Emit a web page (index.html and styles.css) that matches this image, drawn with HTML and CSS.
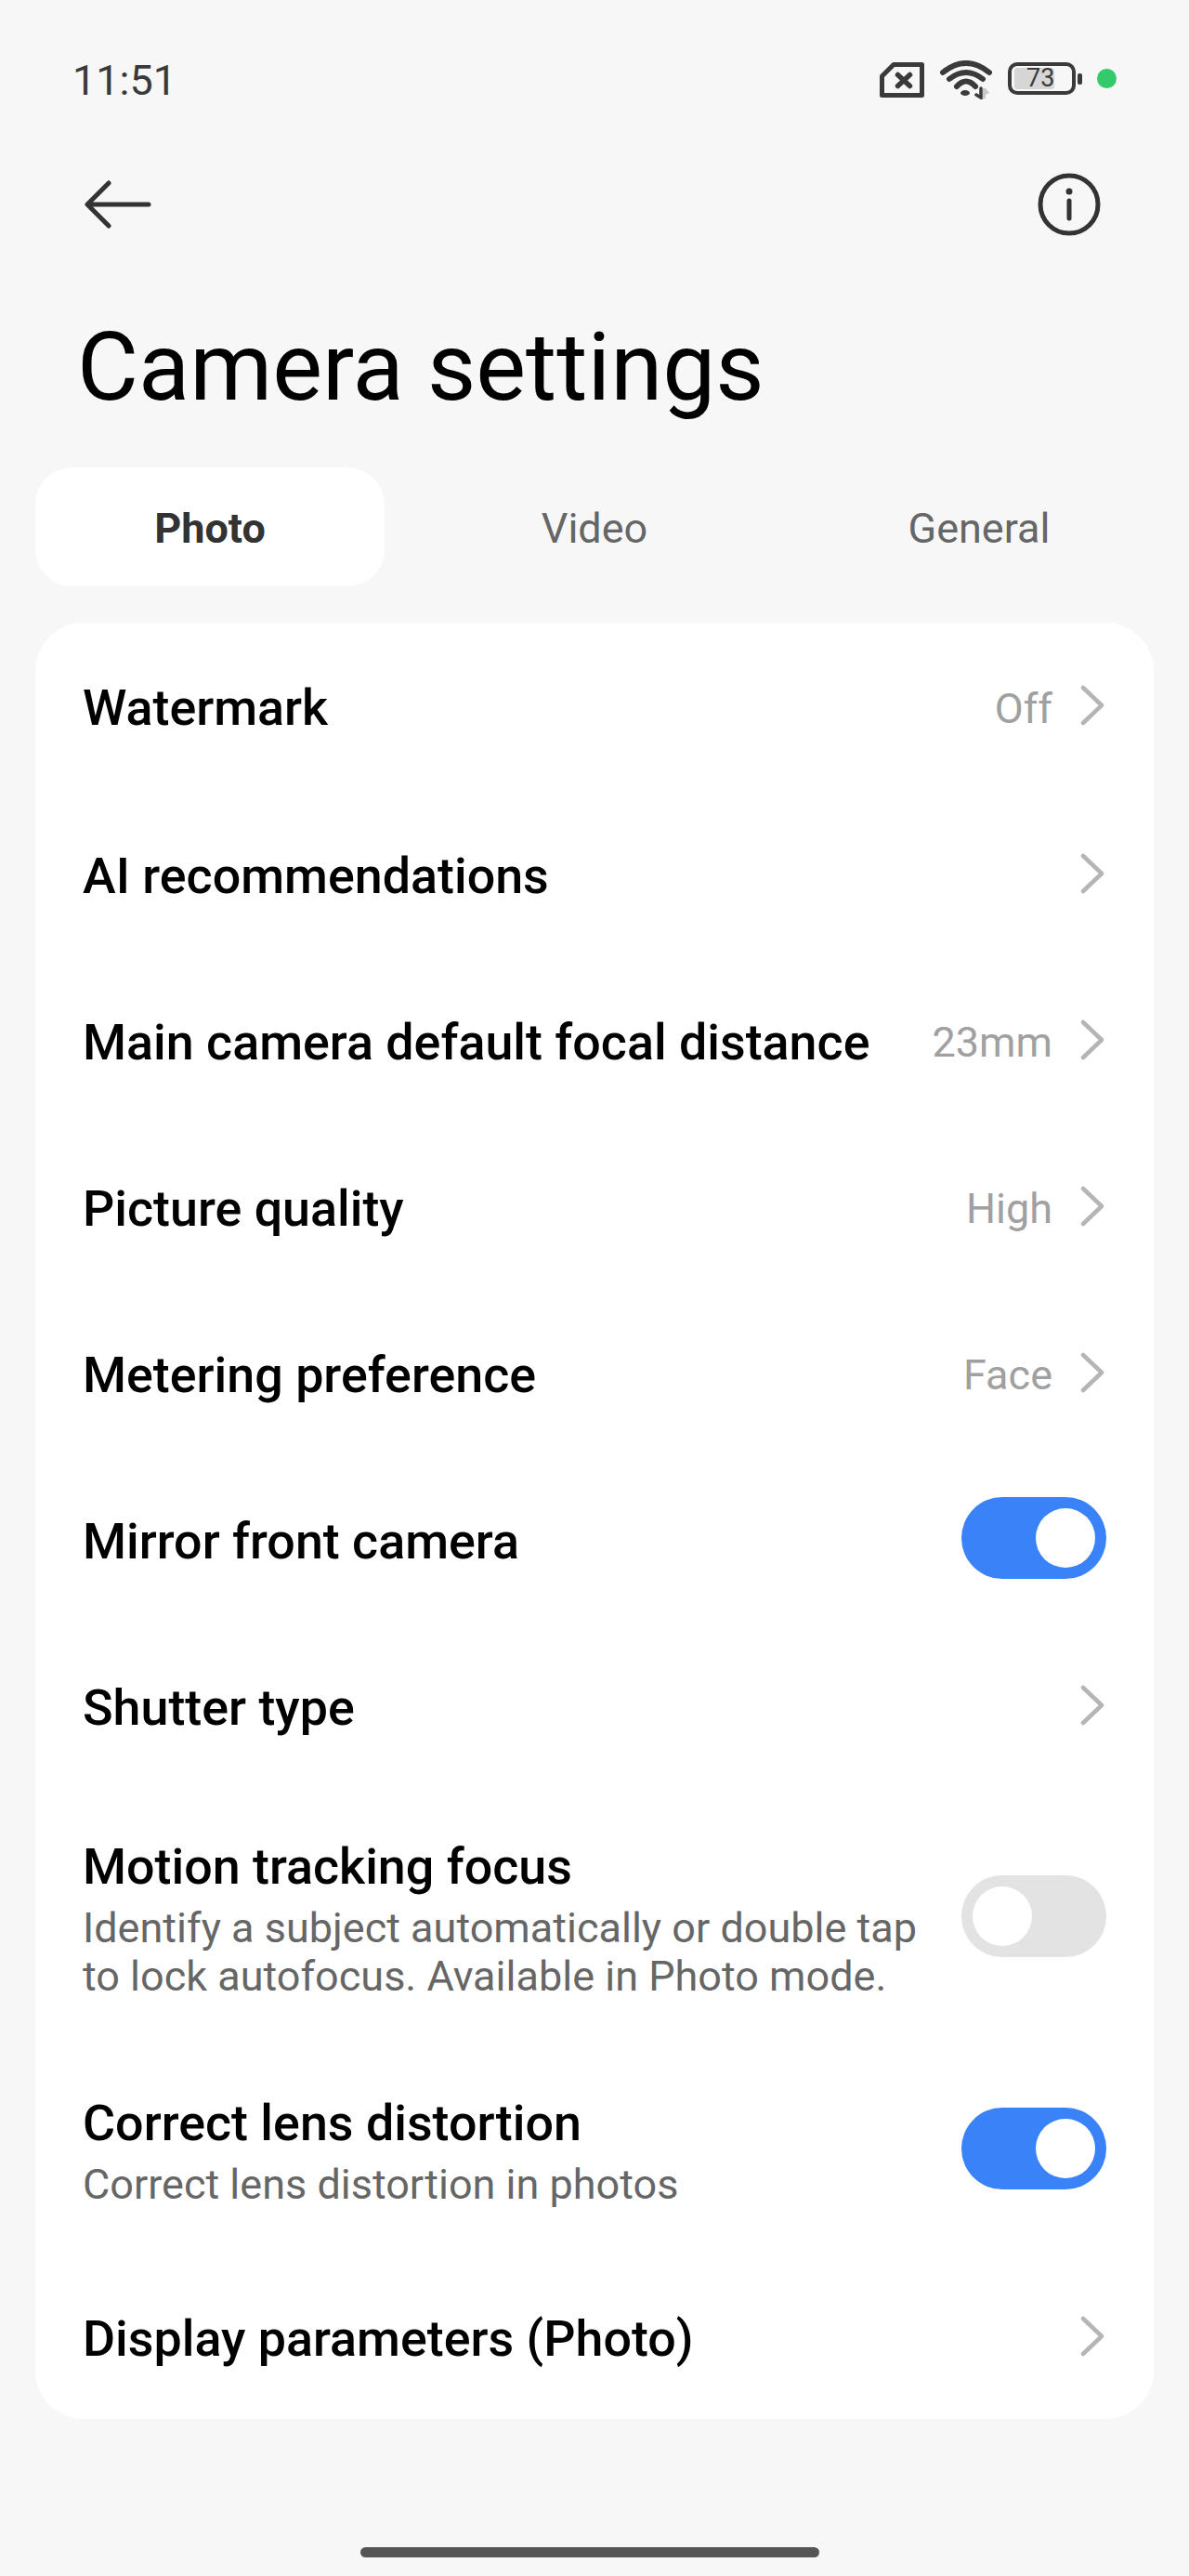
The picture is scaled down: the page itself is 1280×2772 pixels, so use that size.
FILE: index.html
```html
<!DOCTYPE html>
<html lang="en">
<head>
    <meta charset="UTF-8">
    <meta name="viewport" content="width=device-width, initial-scale=1.0">
    <title>Camera settings</title>
    <link rel="stylesheet" href="styles.css">
</head>
<body>
    <div class="status-bar">
        <span class="time">11:51</span>
        <div class="status-icons">
            <svg class="icon-sim" width="48" height="38" viewBox="0 0 48 38" fill="none" stroke="#3a3a3a" stroke-width="5" stroke-linejoin="round" stroke-linecap="round">
                <path d="M2.5 15 L15 2.5 H45.5 V35.5 H2.5 Z"/>
                <path d="M19.5 13.5 L32.5 25.5 M32.5 13.5 L19.5 25.5" stroke-width="5.5"/>
            </svg>
            <svg class="icon-wifi" width="56" height="42" viewBox="0 0 56 42" fill="none" stroke="#3a3a3a" stroke-width="6" stroke-linecap="round">
                <path d="M3 13 Q28 -7 53 13"/>
                <path d="M10 20 Q28 6 46 20"/>
                <path d="M18 28 Q28 17 38 28"/>
                <ellipse cx="27" cy="35" rx="5" ry="3" fill="#3a3a3a" stroke="none"/>
                <path d="M44 30 V40 L39 37" stroke-width="3.5"/>
                <path d="M46 30 H49 L53 35 L49 37 V41 H46 Z" fill="#c8c8c8" stroke="none"/>
            </svg>
            <div class="battery">
                <div class="battery-body">
                    <div class="battery-fill"></div>
                    <span class="battery-level">73</span>
                </div>
                <div class="battery-tip"></div>
            </div>
            <div class="green-dot"></div>
        </div>
    </div>

    <div class="toolbar">
        <svg width="74" height="52" viewBox="0 0 74 52" fill="none" stroke="#333" stroke-width="5" stroke-linecap="round" stroke-linejoin="round">
            <path d="M69 26 H4 M26 3 L3 26 L26 49"/>
        </svg>
        <svg width="68" height="68" viewBox="0 0 68 68" fill="none" stroke="#333" stroke-width="5" stroke-linecap="round">
            <circle cx="34" cy="34" r="31"/>
            <path d="M34 30 V49"/>
            <circle cx="34" cy="20" r="3.5" fill="#333" stroke="none"/>
        </svg>
    </div>

    <h1>Camera settings</h1>

    <div class="tabs">
        <div class="tab active">Photo</div>
        <div class="tab">Video</div>
        <div class="tab">General</div>
    </div>

    <div class="card">
        <div class="row">
            <div class="row-text"><div class="row-title">Watermark</div></div>
            <span class="value">Off</span>
            <svg class="chevron" width="26" height="44" viewBox="0 0 26 44"><path d="M3 3 L23 22 L3 41"/></svg>
        </div>
        <div class="row">
            <div class="row-text"><div class="row-title">AI recommendations</div></div>
            <svg class="chevron" width="26" height="44" viewBox="0 0 26 44"><path d="M3 3 L23 22 L3 41"/></svg>
        </div>
        <div class="row">
            <div class="row-text"><div class="row-title">Main camera default focal distance</div></div>
            <span class="value">23mm</span>
            <svg class="chevron" width="26" height="44" viewBox="0 0 26 44"><path d="M3 3 L23 22 L3 41"/></svg>
        </div>
        <div class="row">
            <div class="row-text"><div class="row-title">Picture quality</div></div>
            <span class="value">High</span>
            <svg class="chevron" width="26" height="44" viewBox="0 0 26 44"><path d="M3 3 L23 22 L3 41"/></svg>
        </div>
        <div class="row">
            <div class="row-text"><div class="row-title">Metering preference</div></div>
            <span class="value">Face</span>
            <svg class="chevron" width="26" height="44" viewBox="0 0 26 44"><path d="M3 3 L23 22 L3 41"/></svg>
        </div>
        <div class="row row-mirror">
            <div class="row-text"><div class="row-title">Mirror front camera</div></div>
            <div class="switch on"><div class="knob"></div></div>
        </div>
        <div class="row">
            <div class="row-text"><div class="row-title">Shutter type</div></div>
            <svg class="chevron" width="26" height="44" viewBox="0 0 26 44"><path d="M3 3 L23 22 L3 41"/></svg>
        </div>
        <div class="row row-motion">
            <div class="row-text has-sub">
                <div class="row-title">Motion tracking focus</div>
                <div class="row-sub">Identify a subject automatically or double tap<br>to lock autofocus. Available in Photo mode.</div>
            </div>
            <div class="switch"><div class="knob"></div></div>
        </div>
        <div class="row row-lens">
            <div class="row-text has-sub">
                <div class="row-title">Correct lens distortion</div>
                <div class="row-sub">Correct lens distortion in photos</div>
            </div>
            <div class="switch on"><div class="knob"></div></div>
        </div>
        <div class="row row-last">
            <div class="row-text"><div class="row-title">Display parameters (Photo)</div></div>
            <svg class="chevron" width="26" height="44" viewBox="0 0 26 44"><path d="M3 3 L23 22 L3 41"/></svg>
        </div>
    </div>

    <div class="home-bar"></div>
</body>
</html>
```

FILE: styles.css
```css
body {
    font-family: Roboto, "Liberation Sans", sans-serif;
    background-color: #f7f7f7;
    margin: 0;
    padding: 0;
    color: #000;
}
.status-bar {
    height: 172px;
    padding: 0 78px;
    display: flex;
    justify-content: space-between;
    align-items: center;
    box-sizing: border-box;
}
.time {
    font-size: 45px;
    color: #3a3a3a;
}
.status-icons {
    display: flex;
    align-items: center;
}
.icon-wifi {
    margin-left: 17px;
}
.battery {
    display: flex;
    align-items: center;
    margin: 0 0 3px 17px;
}
.battery-body {
    position: relative;
    width: 73px;
    height: 35px;
    border: 4px solid #3a3a3a;
    border-radius: 10px;
    box-sizing: border-box;
}
.battery-fill {
    position: absolute;
    left: 3px;
    top: 2px;
    bottom: 2px;
    width: 43px;
    background-color: #d6d6d6;
    border-radius: 3px;
}
.battery-level {
    position: absolute;
    left: 16px;
    top: 0;
    font-size: 27px;
    line-height: 27px;
    color: #3a3a3a;
}
.battery-tip {
    width: 5px;
    height: 12px;
    margin-left: 2px;
    background-color: #3a3a3a;
    border-radius: 2px;
}
.green-dot {
    width: 21px;
    height: 21px;
    margin: 0 0 3px 16px;
    background-color: #34c96b;
    border-radius: 50%;
}
.toolbar {
    height: 96px;
    padding: 0 95px 0 91px;
    display: flex;
    justify-content: space-between;
    align-items: center;
}
h1 {
    margin: 0;
    padding: 64px 0 0 83px;
    height: 171px;
    font-size: 101.5px;
    font-weight: 400;
    line-height: 128px;
    color: #000;
}
.tabs {
    display: grid;
    grid-template-columns: repeat(3, 376px);
    gap: 38px;
    margin: 0 38px;
    height: 128px;
}
.tab {
    display: flex;
    justify-content: center;
    align-items: center;
    padding-top: 2px;
    font-size: 45px;
    color: #666;
    border-radius: 40px;
}
.tab.active {
    background-color: #fff;
    color: #333;
    font-weight: 700;
}
.card {
    margin: 39px 38px 0;
    height: 1933px;
    padding: 0 51px;
    background-color: #fff;
    border-radius: 52px;
    box-sizing: border-box;
}
.row {
    display: flex;
    align-items: center;
    height: 179px;
}
.row:first-child {
    height: 182px;
}
.row-mirror .switch {
    margin-bottom: 5px;
}
.row-motion {
    height: 272px;
}
.row-lens {
    height: 228px;
}
.row-last {
    height: 180px;
}
.row-text {
    flex: 1;
    padding-top: 2px;
}
.row-text.has-sub {
    padding-top: 6px;
}
.row-title {
    font-size: 53.8px;
    font-weight: 500;
    line-height: 64px;
}
.row-sub {
    margin-top: 8px;
    font-size: 45px;
    line-height: 52px;
    color: #666;
}
.value {
    padding-top: 2px;
    margin-right: 30px;
    font-size: 45px;
    color: #a0a0a0;
}
.chevron {
    margin: 0 2px 4px 0;
    fill: none;
    stroke: #b5b5b5;
    stroke-width: 4.5;
    stroke-linecap: round;
    stroke-linejoin: round;
}
.switch {
    display: flex;
    align-items: center;
    justify-content: flex-start;
    width: 156px;
    height: 88px;
    padding: 0 12px;
    background-color: #e3e3e3;
    border-radius: 44px;
    box-sizing: border-box;
}
.switch.on {
    justify-content: flex-end;
    background-color: #3a82f7;
}
.knob {
    width: 64px;
    height: 64px;
    background-color: #fff;
    border-radius: 50%;
}
.home-bar {
    width: 494px;
    height: 11px;
    margin: 138px 0 0 388px;
    background-color: #555;
    border-radius: 6px;
}
```
